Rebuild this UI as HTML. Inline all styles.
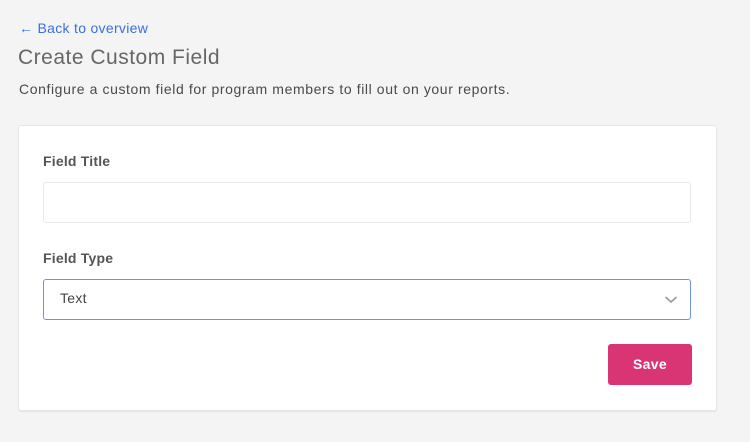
<!DOCTYPE html>
<html><head><style>
body{margin:0;width:750px;height:442px;background:#f4f4f4;font-family:"Liberation Sans",sans-serif;position:relative;overflow:hidden}
.a{position:absolute;white-space:nowrap}
</style></head><body>
<div class="a" style="left:19px;top:20px;font-size:14px;color:#3a6fe0;letter-spacing:0.3px">← Back to overview</div>
<div class="a" style="left:18px;top:46px;font-size:21px;color:#666;font-weight:300;letter-spacing:0.5px">Create Custom Field</div>
<div class="a" style="left:19px;top:81px;font-size:14px;color:#4a4a4a;letter-spacing:0.6px">Configure a custom field for program members to fill out on your reports.</div>
<div class="a" style="left:18px;top:125px;width:697px;height:284px;background:#fff;border:1px solid #e6e6e6;border-radius:3px;box-shadow:0 1px 1px #e4e4e4"></div>
<div class="a" style="left:43px;top:153px;font-size:14px;font-weight:bold;color:#555;letter-spacing:0.2px">Field Title</div>
<div class="a" style="left:43px;top:182px;width:646px;height:39px;border:1px solid #e8e8e8;border-radius:3px;background:#fff"></div>
<div class="a" style="left:43px;top:250px;font-size:14px;font-weight:bold;color:#555;letter-spacing:0.2px">Field Type</div>
<div class="a" style="left:43px;top:279px;width:646px;height:39px;border:1px solid #6f92e6;border-radius:3px;background:#fff"></div>
<div class="a" style="left:60px;top:290px;font-size:14px;color:#444;letter-spacing:0.3px">Text</div>
<svg class="a" style="left:664px;top:295px" width="14" height="10"><path d="M1.5 2 L7 7 L12.5 2" fill="none" stroke="#999" stroke-width="1.6"/></svg>
<div class="a" style="left:608px;top:344px;width:84px;height:41px;background:#d93473;border-radius:3px;color:#fff;font-size:14px;font-weight:bold;text-align:center;line-height:41px;letter-spacing:0.3px">Save</div>
</body></html>
